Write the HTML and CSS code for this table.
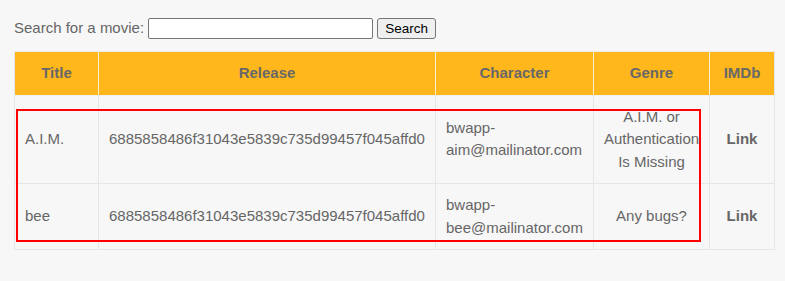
FILE: index.html
```html
<!DOCTYPE html>
<html lang="en">
<head>
  <meta charset="UTF-8">
  <title>Movie Search</title>
  <link rel="stylesheet" href="styles.css">
</head>
<body>
  <div class="container">
    <form class="search-form">
      <label for="title">Search for a movie:</label>
      <input type="text" id="title" name="title">
      <button type="button" class="btn">Search</button>
    </form>

    <div class="table-wrap">
      <table class="movies">
        <colgroup>
          <col class="col-title">
          <col class="col-release">
          <col class="col-character">
          <col class="col-genre">
          <col class="col-imdb">
        </colgroup>
        <thead>
          <tr>
            <th>Title</th>
            <th>Release</th>
            <th>Character</th>
            <th>Genre</th>
            <th>IMDb</th>
          </tr>
        </thead>
        <tbody>
          <tr>
            <td>A.I.M.</td>
            <td>6885858486f31043e5839c735d99457f045affd0</td>
            <td>bwapp-aim@mailinator.com</td>
            <td class="center">A.I.M. or Authentication Is Missing</td>
            <td class="center"><a href="#" class="link">Link</a></td>
          </tr>
          <tr>
            <td>bee</td>
            <td>6885858486f31043e5839c735d99457f045affd0</td>
            <td>bwapp-bee@mailinator.com</td>
            <td class="center">Any bugs?</td>
            <td class="center"><a href="#" class="link">Link</a></td>
          </tr>
        </tbody>
      </table>
      <div class="highlight"></div>
    </div>
  </div>
</body>
</html>
```

FILE: styles.css
```css
* {
  box-sizing: border-box;
  margin: 0;
  padding: 0;
}

body {
  font-family: "Liberation Sans", Arial, sans-serif;
  font-size: 15px;
  line-height: 1.5;
  color: #666;
  background-color: #f7f7f7;
}

.container {
  width: 760px;
  margin-left: 14px;
  padding-top: 17px;
}

.search-form {
  display: flex;
  align-items: center;
  height: 23px;
  margin-bottom: 11px;
}

.search-form label {
  margin-right: 4px;
}

.search-form input {
  width: 225px;
  height: 21px;
  border: 1px solid #767676;
  border-radius: 2px;
  background: #fff;
  font-family: inherit;
  font-size: 13px;
  padding: 1px 2px;
}

.btn {
  margin-left: 4px;
  width: 59px;
  height: 21px;
  border: 1px solid #767676;
  border-radius: 3px;
  background-color: #efefef;
  color: #000;
  font-family: inherit;
  font-size: 13.5px;
  line-height: 1;
}

.table-wrap {
  position: relative;
}

.movies {
  width: 760px;
  table-layout: fixed;
  border-collapse: collapse;
  border: 1px solid #e6e6e6;
}

.col-title { width: 84px; }
.col-release { width: 337px; }
.col-character { width: 158px; }
.col-genre { width: 116px; }
.col-imdb { width: 65px; }

.movies th {
  background-color: #ffb71b;
  color: #686868;
  font-weight: bold;
  text-align: center;
  padding: 10px;
  border-left: 1px solid #fbefd3;
  border-top: 1px solid #ececec;
  border-bottom: 1px solid #f0f0f0;
}

.movies th:first-child {
  border-left: 1px solid #e6e6e6;
}

.movies td {
  padding: 10px;
  border: 1px solid #e6e6e6;
  vertical-align: middle;
}

.movies td.center {
  text-align: center;
}

.link {
  color: #666;
  font-weight: bold;
  text-decoration: none;
}

.highlight {
  position: absolute;
  left: 2px;
  top: 58px;
  width: 685px;
  height: 133px;
  border: 2px solid #ff0000;
  pointer-events: none;
}
```
